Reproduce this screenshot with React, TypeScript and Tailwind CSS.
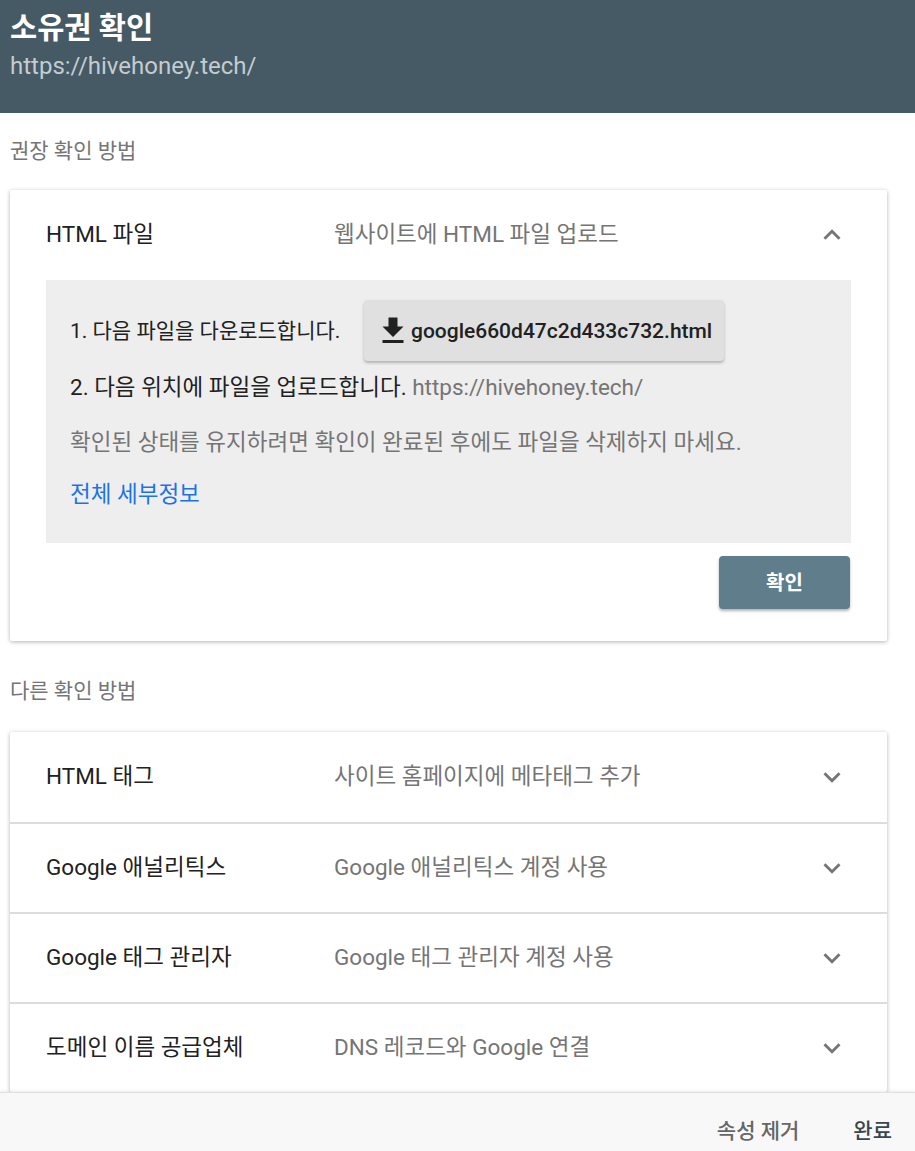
import React from "react";

const ChevronUp = () => (
  <svg width="34" height="34" viewBox="0 0 24 24" className="block">
    <path d="M12 8l-6 6 1.41 1.41L12 10.83l4.59 4.58L18 14z" fill="#757575" />
  </svg>
);

const ChevronDown = () => (
  <svg width="34" height="34" viewBox="0 0 24 24" className="block">
    <path d="M16.59 8.59L12 13.17 7.41 8.59 6 10l6 6 6-6z" fill="#757575" />
  </svg>
);

const DownloadIcon = () => (
  <svg width="36" height="36" viewBox="0 0 24 24" className="block">
    <path d="M19 9h-4V3H9v6H5l7 7 7-7zM5 18v2h14v-2H5z" fill="#212121" />
  </svg>
);

const otherMethods = [
  { name: "HTML 태그", desc: "사이트 홈페이지에 메타태그 추가" },
  { name: "Google 애널리틱스", desc: "Google 애널리틱스 계정 사용" },
  { name: "Google 태그 관리자", desc: "Google 태그 관리자 계정 사용" },
  { name: "도메인 이름 공급업체", desc: "DNS 레코드와 Google 연결" },
];

export default function App() {
  return (
    <div className="h-[1151px] flex flex-col bg-white overflow-hidden font-['Roboto','Noto_Sans_CJK_KR',sans-serif]">
      <header className="h-[113px] shrink-0 bg-[#455a64] px-[10px] pt-[10px]">
        <h1 className="text-[29.5px] leading-[36px] font-bold text-white">소유권 확인</h1>
        <div className="mt-[5px] text-[24px] leading-[30px] text-[#c3ccd0]">https://hivehoney.tech/</div>
      </header>

      <main className="flex-1 overflow-hidden">
        <div className="mt-[24px] px-[10px] text-[21px] leading-[28px] text-[#757575]">권장 확인 방법</div>

        <div className="mt-[25px] ml-[10px] w-[877px] bg-white rounded-[2px] shadow-[0_1px_4px_rgba(0,0,0,0.3)]">
          <div className="h-[90px] flex items-center pl-[36px] pr-[38px] text-[22.5px]">
            <div className="w-[288px] text-[#212121]">HTML 파일</div>
            <div className="text-[#757575]">웹사이트에 HTML 파일 업로드</div>
            <div className="ml-auto">
              <ChevronUp />
            </div>
          </div>

          <div className="mx-[36px] bg-[#eeeeee] pl-[24px] pt-[20px] pb-[33px] text-[22.5px] leading-[32px]">
            <div className="flex items-center">
              <span className="w-[294px] whitespace-nowrap text-[21px] text-[#212121]">1. 다음 파일을 다운로드합니다.</span>
              <button className="h-[61px] flex items-center pl-[11px] pr-[12px] rounded-[4px] bg-[#e0e0e0] shadow-[0_2px_3px_rgba(0,0,0,0.25)] text-[21px] font-medium text-[#212121]">
                <DownloadIcon />
                google660d47c2d433c732.html
              </button>
            </div>
            <div className="mt-[10px] text-[#212121]">
              2. 다음 위치에 파일을 업로드합니다. <span className="text-[#757575]">https://hivehoney.tech/</span>
            </div>
            <div className="mt-[23px] text-[#757575]">확인된 상태를 유지하려면 확인이 완료된 후에도 파일을 삭제하지 마세요.</div>
            <div className="mt-[20px] text-[#1a73e8]">전체 세부정보</div>
          </div>

          <div className="flex justify-end pr-[37px] pt-[13px] pb-[32px]">
            <button className="w-[131px] h-[53px] rounded-[4px] bg-[#607d8b] text-white text-[20px] font-bold shadow-[0_2px_3px_rgba(0,0,0,0.3)]">
              확인
            </button>
          </div>
        </div>

        <div className="mt-[36px] px-[10px] text-[21px] leading-[28px] text-[#757575]">다른 확인 방법</div>

        <div className="mt-[27px] ml-[10px] w-[877px] bg-white rounded-[2px] shadow-[0_1px_4px_rgba(0,0,0,0.3)]">
          {otherMethods.map((m, i) => (
            <div
              key={m.name}
              className={`h-[90px] flex items-center pl-[36px] pr-[38px] text-[22.5px] ${i > 0 ? "border-t-2 border-[#dcdcdc]" : ""}`}
            >
              <div className="w-[288px] text-[#212121]">{m.name}</div>
              <div className="text-[#757575]">{m.desc}</div>
              <div className="ml-auto">
                <ChevronDown />
              </div>
            </div>
          ))}
        </div>
      </main>

      <footer className="h-[59px] shrink-0 bg-[#f8f8f8] border-t border-[#e0e0e0] shadow-[0_-1px_3px_rgba(0,0,0,0.08)] flex justify-end items-start gap-[54px] pr-[23px] pt-[25px] text-[21px] leading-[26px] font-medium">
        <span className="text-[#666666]">속성 제거</span>
        <span className="text-[#37474f]">완료</span>
      </footer>
    </div>
  );
}
